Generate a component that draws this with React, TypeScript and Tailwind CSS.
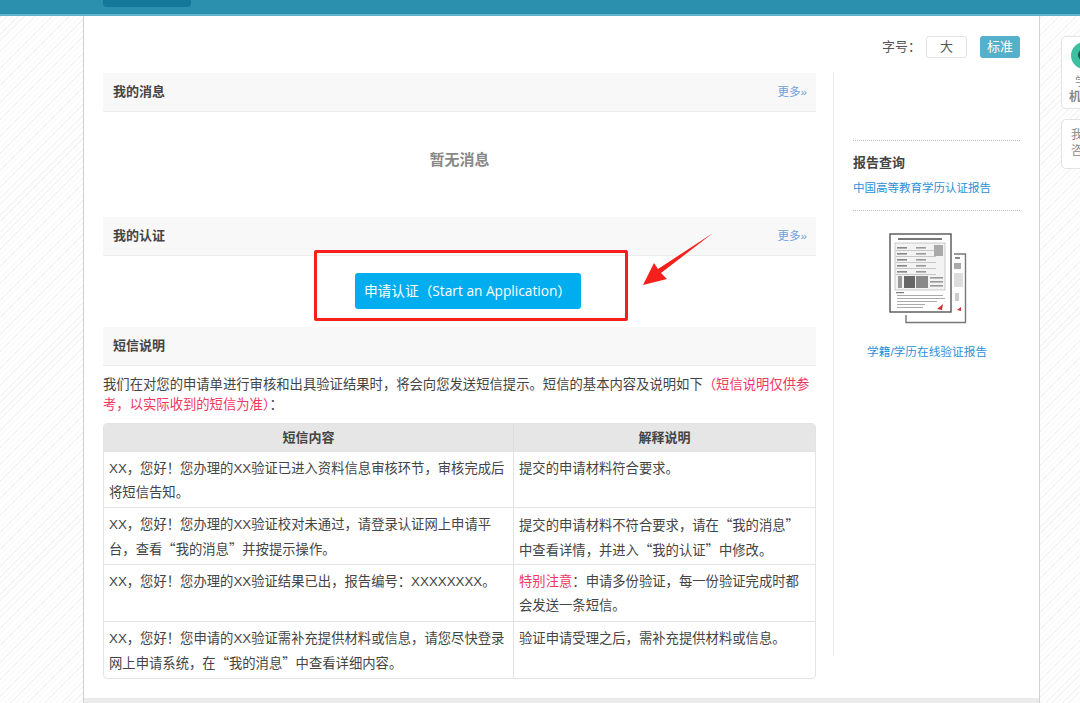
const Q = ({ children }: { children: string }) => (
  <span className="font-['Noto_Sans_CJK_SC',sans-serif]">“{children}”</span>
);

const rows = [
  {
    left: <>XX，您好！您办理的XX验证已进入资料信息审核环节，审核完成后将短信告知。</>,
    right: <>提交的申请材料符合要求。</>,
    h: "h-14",
  },
  {
    left: (
      <>
        XX，您好！您办理的XX验证校对未通过，请登录认证网上申请平台，查看<Q>我的消息</Q>并按提示操作。
      </>
    ),
    right: (
      <>
        提交的申请材料不符合要求，请在<Q>我的消息</Q>中查看详情，并进入<Q>我的认证</Q>中修改。
      </>
    ),
    h: "h-[57px]",
  },
  {
    left: <>XX，您好！您办理的XX验证结果已出，报告编号：XXXXXXXX。</>,
    right: (
      <>
        <span className="text-[#f0385f]">特别注意</span>：申请多份验证，每一份验证完成时都会发送一条短信。
      </>
    ),
    h: "h-[57px]",
  },
  {
    left: (
      <>
        XX，您好！您申请的XX验证需补充提供材料或信息，请您尽快登录网上申请系统，在<Q>我的消息</Q>中查看详细内容。
      </>
    ),
    right: <>验证申请受理之后，需补充提供材料或信息。</>,
    h: "h-[57px]",
  },
];

function SectionHead({ title, more }: { title: string; more?: boolean }) {
  return (
    <div className="flex h-[39px] items-center justify-between border-b border-[#ececec] bg-[#f8f8f8] pl-[10px] pr-[9px]">
      <span className="text-[13px] font-bold text-[#444]">{title}</span>
      {more && <span className="pt-px text-[11.5px] text-[#6f9fd8]">更多»</span>}
    </div>
  );
}

// blurry thumbnail of the report, front sheet plus the one peeking out behind it
function ReportDoc() {
  const tableRows = [17, 23, 29, 35, 41];
  return (
    <svg width="78" height="92" viewBox="0 0 78 92" className="block">
      <path d="M65 21H76.5V89.5H17V82" fill="none" stroke="#777" strokeWidth="1.4" />
      <rect x="66" y="24" width="5" height="2" fill="#888" />
      <rect x="65" y="30" width="7" height="6" fill="#aaa" />
      <rect x="65" y="40" width="9" height="14" fill="#ddd" />
      <rect x="66" y="60" width="4" height="8" fill="#ccc" />
      <path d="M68 77l4-3v4z" fill="#c33" />
      <rect x="1" y="1" width="61" height="78" fill="#fff" stroke="#555" strokeWidth="1.4" />
      <rect x="9" y="5" width="44" height="2" fill="#777" />
      <rect x="6" y="10" width="50" height="47" fill="#f3f3f3" stroke="#aaa" strokeWidth="0.6" />
      {tableRows.map((y) => (
        <g key={y}>
          <rect x="7" y={y} width="40" height="0.8" fill="#bbb" />
          <rect x="8" y={y - 3} width="10" height="1.6" fill="#888" />
          <rect x="27" y={y - 3} width="10" height="1.6" fill="#999" />
        </g>
      ))}
      <rect x="45" y="12" width="9" height="11" fill="#aaa" />
      <rect x="9" y="43" width="4" height="12" fill="#999" />
      <rect x="15" y="43" width="11" height="12" fill="#666" />
      <rect x="27" y="43" width="12" height="12" fill="#888" />
      <rect x="41" y="44" width="13" height="1.6" fill="#999" />
      <rect x="41" y="48" width="13" height="1.6" fill="#999" />
      <rect x="41" y="52" width="13" height="1.6" fill="#999" />
      <rect x="7" y="59" width="8" height="1.2" fill="#777" />
      <rect x="8" y="62" width="46" height="1" fill="#aaa" />
      <rect x="8" y="65" width="48" height="1" fill="#aaa" />
      <rect x="8" y="68" width="40" height="1" fill="#aaa" />
      <rect x="8" y="71" width="28" height="1" fill="#aaa" />
      <rect x="8" y="74" width="26" height="1" fill="#aaa" />
      <path d="M48 76l6-5-1 6z" fill="#c33" />
    </svg>
  );
}

export default function App() {
  return (
    <div
      lang="zh-CN"
      className="h-[703px] w-[1080px] overflow-hidden bg-[repeating-linear-gradient(135deg,#f4f4f4_0,#f4f4f4_1px,#fff_1px,#fff_4px)] font-['Liberation_Sans','Noto_Sans_CJK_SC',sans-serif]"
    >
      <header className="h-4 border-b-2 border-[#5eb4cb] bg-[#2b8fae] pl-[103px]">
        <div className="h-[7px] w-[88px] rounded-b-[4px] bg-[#14789a]" />
      </header>

      <div className="flex">
        <main className="ml-[83px] h-[687px] w-[957px] shrink-0 border-x border-[#d0d0d0] bg-white">
          <div className="flex h-14 items-start justify-end pr-[19px] pt-5 text-[13px] text-[#555]">
            <span className="mr-[5px] leading-[22px]">字号：</span>
            <span className="flex h-[22px] w-[41px] items-center justify-center rounded-[3px] border border-[#e3e3e3] bg-white">大</span>
            <span className="ml-[13px] flex h-[22px] w-[40px] items-center justify-center rounded-[3px] bg-[#55b0cc] text-white">标准</span>
          </div>

          <div className="flex h-[626px] pl-[19px]">
            <div className="w-[713px] pt-px">
              <SectionHead title="我的消息" more />
              <div className="flex h-[105px] items-center justify-center pb-2 text-[15px] font-bold text-[#888]">暂无消息</div>
              <SectionHead title="我的认证" more />
              <div className="relative flex h-[71px] items-center justify-center">
                <button className="mb-[2px] ml-4 h-9 w-[226px] rounded-[3px] bg-[#00aeef] pt-px font-['Open_Sans','Noto_Sans_CJK_SC',sans-serif] text-[13.7px] text-white">申请认证（Start an Application）</button>
                <div className="absolute left-[211px] top-[-6px] h-[71px] w-[314px] rounded-[2px] border-[3px] border-[#f5201c]" />
                <svg className="absolute left-[539px] top-[-24px]" width="72" height="56" viewBox="0 0 72 56">
                  <path d="M71 1 L19 41 L25 47 L1 53 L12 31 L16 37 Z" fill="#f5201c" />
                </svg>
              </div>
              <SectionHead title="短信说明" />
              <p className="mt-[9px] text-[13.33px] leading-5 text-[#444]">
                我们在对您的申请单进行审核和出具验证结果时，将会向您发送短信提示。短信的基本内容及说明如下
                <span className="text-[#f0385f]">（短信说明仅供参考，以实际收到的短信为准）</span>：
              </p>
              <div className="mt-2 overflow-hidden rounded-[4px] border border-[#e3e3e3] text-[13.33px] text-[#444]">
                <div className="flex h-[27px] items-center bg-[#e6e6e6] text-[13px] font-bold">
                  <div className="w-[410px] border-r border-[#dcdcdc] text-center leading-[27px]">短信内容</div>
                  <div className="flex-1 text-center">解释说明</div>
                </div>
                {rows.map((row, i) => (
                  <div key={i} className={`flex ${row.h} border-t border-[#e3e3e3] leading-6`}>
                    <div className="w-[410px] border-r border-[#e3e3e3] px-[5px] pt-[5px]">{row.left}</div>
                    <div className="flex-1 px-[5px] pt-[5px]">{row.right}</div>
                  </div>
                ))}
              </div>
            </div>

            <aside className="ml-[17px] h-[584px] w-[187px] border-l border-[#ececec] pl-[19px]">
              <div className="mt-[68px] border-t border-dotted border-[#bbb] pt-[13px]">
                <h3 className="text-[13px] font-bold leading-[18px] text-[#444]">报告查询</h3>
                <p className="mt-[7px] text-[11.5px] leading-[18px] text-[#2b8fd8]">中国高等教育学历认证报告</p>
              </div>
              <div className="mt-[13px] border-t border-dotted border-[#bbb] pt-[22px]">
                <div className="pl-[36px]"><ReportDoc /></div>
                <p className="mt-[18px] pl-[14px] text-[11.7px] leading-[18px] text-[#2b8fd8]">学籍/学历在线验证报告</p>
              </div>
            </aside>
          </div>
          <div className="h-[5px] bg-[#ebebeb]" />
        </main>

        <div className="ml-[21px] mt-5 w-[60px] shrink-0 text-[12px] text-[#888]">
          <div className="h-[73px] w-[60px] rounded-[5px] border border-[#e3e3e3] bg-white pl-[7px] pt-[5px] leading-[15px]">
            <div className="ml-[2px] h-[27px] w-[27px] rounded-full bg-[#3cc0a0] p-[7px]">
              <div className="h-3 w-3 rounded-full bg-[#23504a]" />
            </div>
            <div className="mt-[6px] pl-[6px]">学</div>
            <div className="font-bold">机</div>
          </div>
          <div className="mt-[10px] h-[50px] w-[60px] rounded-[5px] border border-[#e3e3e3] bg-white pl-[9px] pt-[7px] leading-4">
            <div>我</div>
            <div>咨</div>
          </div>
        </div>
      </div>
    </div>
  );
}
